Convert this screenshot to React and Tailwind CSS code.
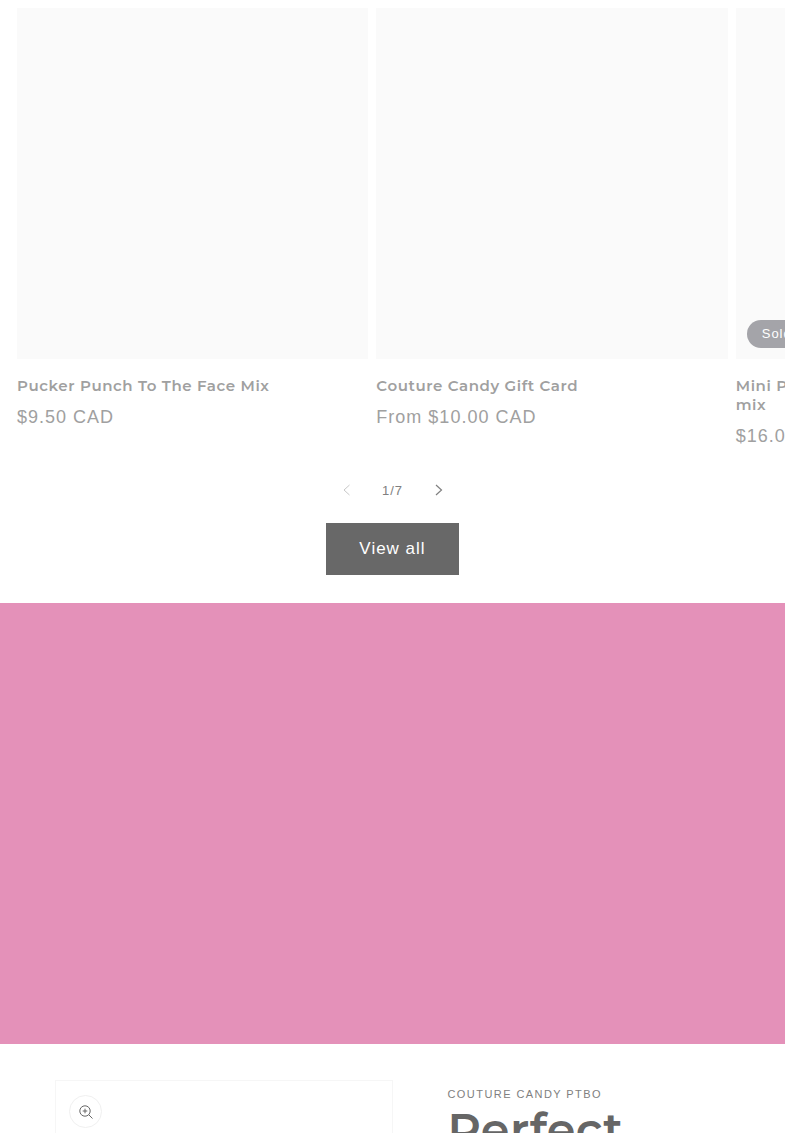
import React from 'react';

const products = [
  { id: 1, title: 'Pucker Punch To The Face Mix', price: '$9.50 CAD' },
  { id: 2, title: 'Couture Candy Gift Card', price: 'From $10.00 CAD' },
  { id: 3, title: 'Mini Pucker Punch To The Face', titleEnd: 'mix', price: '$16.00 CAD', soldOut: true },
];

const ProductCard = ({ product }) => (
  <li className="w-[45.75%] shrink-0">
    <div className="relative aspect-square bg-[#fafafa]">
      {product.soldOut && (
        <span className="absolute bottom-[11px] left-[11px] h-7 rounded-full bg-[#a4a4a9] px-[15px] text-[13px] leading-7 tracking-[1px] whitespace-nowrap text-white">
          Sold out
        </span>
      )}
    </div>
    <h3 className="mt-[17px] font-['Montserrat','Inter',sans-serif] text-[15px] leading-[19px] font-semibold tracking-[0.04em] text-[#a0a0a0]">
      <a href="#product">
        {product.title}
        {product.titleEnd && <span className="block">{product.titleEnd}</span>}
      </a>
    </h3>
    <p className="mt-[10px] text-[18px] leading-6 tracking-[1px] text-[#a0a0a0]">{product.price}</p>
  </li>
);

const App = () => {
  return (
    <main className="h-screen overflow-hidden bg-white font-['Liberation_Sans',sans-serif]">
      <section className="pt-2 pb-7">
        <ul className="flex gap-2 overflow-hidden pl-[17px]">
          {products.map((product) => (
            <ProductCard key={product.id} product={product} />
          ))}
        </ul>

        <div className="mt-5 flex h-11 items-center justify-center text-[#808080]">
          <button type="button" aria-label="Slide left" disabled className="flex size-12 items-center justify-center text-[#c8c8c8]">
            <svg viewBox="0 0 10 12" className="h-3 w-[10px]" fill="none" stroke="currentColor">
              <path d="M7.5 1 2 6l5.500 5" />
            </svg>
          </button>
          <span className="w-11 text-center text-[13px] tracking-[1px]">1/7</span>
          <button type="button" aria-label="Slide right" className="flex size-12 items-center justify-center">
            <svg viewBox="0 0 10 12" className="h-3 w-[10px]" fill="none" stroke="currentColor" strokeWidth="1.2">
              <path d="M2 1 7.500 6l-5.500 5" />
            </svg>
          </button>
        </div>

        <div className="mt-[11px] flex justify-center">
          <a
            href="#collection"
            className="flex h-[52px] items-center bg-[#686868] px-[33px] pb-[2px] text-[17px] tracking-[1px] text-white"
          >
            View all
          </a>
        </div>
      </section>

      <section className="h-[441px] bg-[#e491b9]" />

      {/* Featured product */}
      <section className="flex gap-[55px] px-[55px] pt-9">
        <div className="aspect-square w-1/2 shrink-0 border border-[#f6f6f6] px-[13px] pt-[14px]">
          <button
            type="button"
            aria-label="Open media"
            className="flex size-[33px] items-center justify-center rounded-full border border-[#f0f0f0] bg-white text-[#666666]"
          >
            <svg viewBox="0 0 14 14" className="size-[14px]" fill="none" stroke="currentColor">
              <circle cx="6" cy="6" r="5.200" />
              <path d="M6 3.700v4.600M3.700 6h4.600M9.800 9.800l3.700 3.700" />
            </svg>
          </button>
        </div>
        <div className="pt-2">
          <p className="text-[11px] leading-3 tracking-[0.13em] whitespace-nowrap text-[#808080] uppercase">
            Couture Candy PTBO
          </p>
          <h2 className="font-['Montserrat','Inter',sans-serif] text-[46px] leading-[60px] font-semibold tracking-[0.01em] text-[#666666]">
            Perfect
          </h2>
        </div>
      </section>
    </main>
  );
};

export default App;
